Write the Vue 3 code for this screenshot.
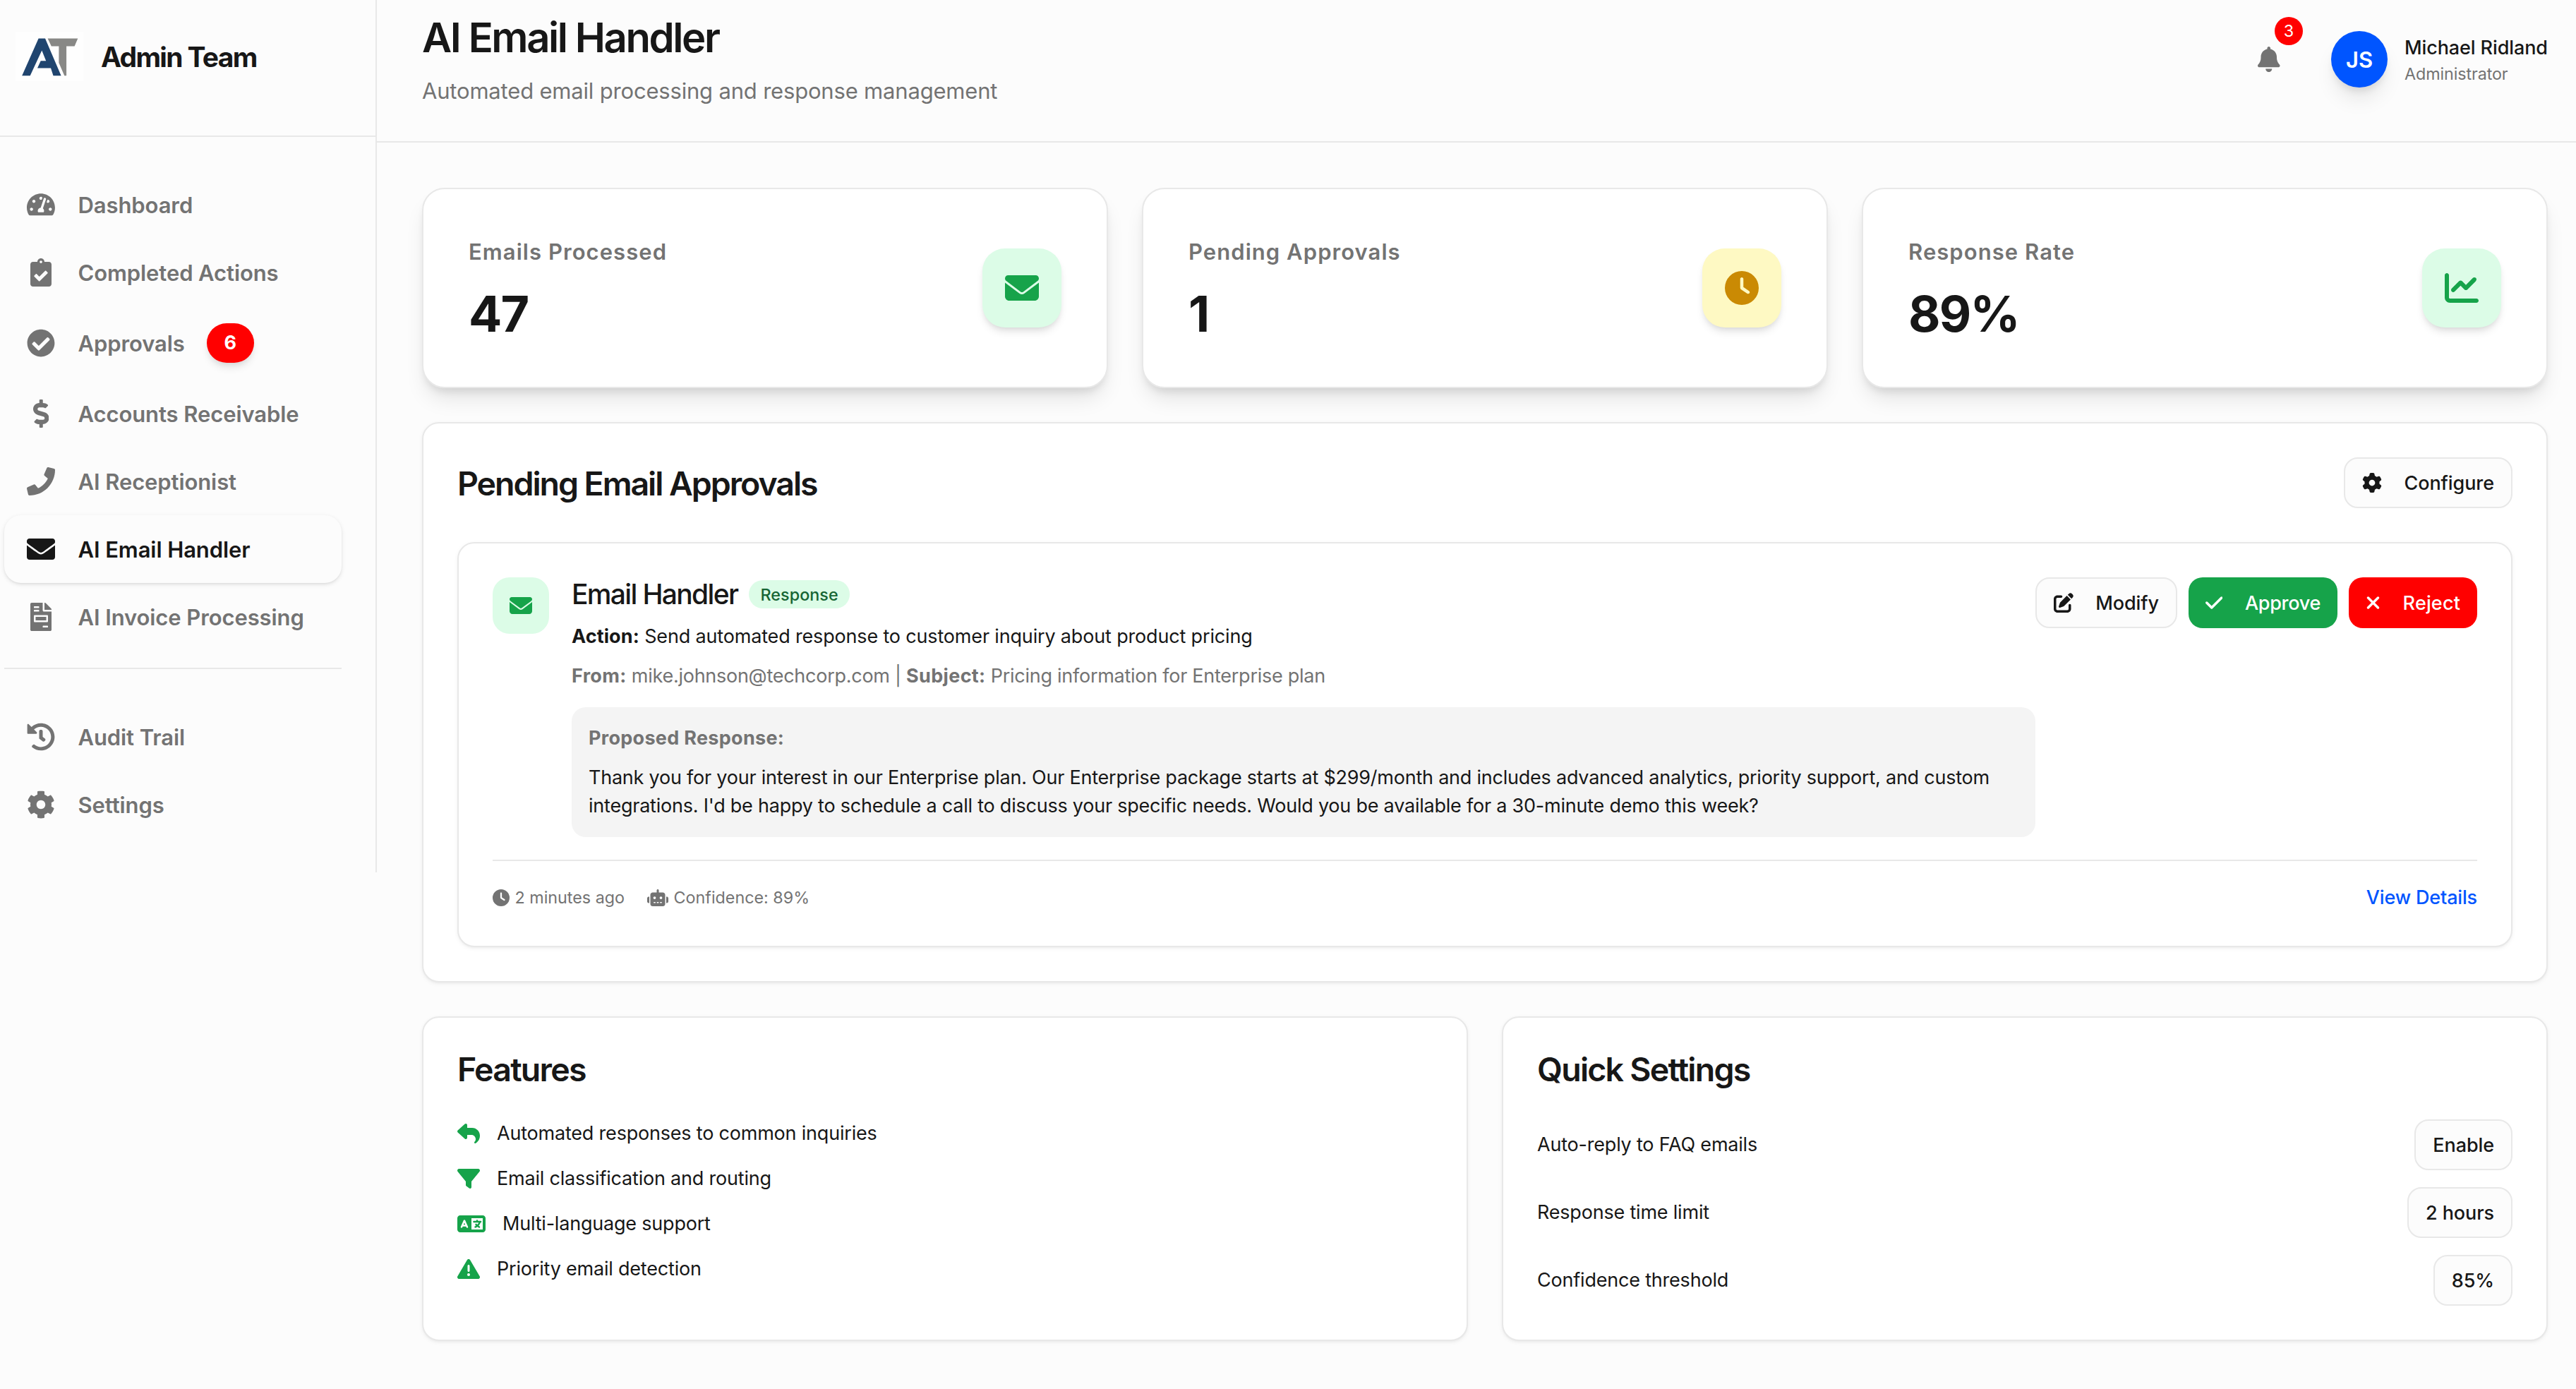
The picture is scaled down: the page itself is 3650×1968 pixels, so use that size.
<script setup>
import { h } from "vue";

// name: [width, height, path]
const icons = {
  gauge: [576, 512, "M288 32C128.94 32 0 160.94 0 320c0 52.8 14.25 102.26 39.06 144.8 5.61 9.62 16.3 15.2 27.44 15.2h443c11.14 0 21.83-5.58 27.44-15.2C561.75 422.26 576 372.8 576 320c0-159.06-128.94-288-288-288zm0 64c14.71 0 26.58 10.13 30.32 23.65-1.11 2.26-2.64 4.23-3.45 6.67l-9.22 27.67c-5.13 3.49-10.97 6.01-17.64 6.01-17.67 0-32-14.33-32-32S270.33 96 288 96zM96 384c-17.67 0-32-14.33-32-32s14.33-32 32-32 32 14.33 32 32-14.33 32-32 32zm48-160c-17.67 0-32-14.33-32-32s14.33-32 32-32 32 14.33 32 32-14.33 32-32 32zm246.77-72.41l-61.33 184C343.13 347.33 352 364.54 352 384c0 11.72-3.38 22.55-8.88 32H232.88c-5.5-9.45-8.88-20.28-8.88-32 0-33.94 26.5-61.43 59.9-63.59l61.34-184.01c4.17-12.56 17.73-19.45 30.36-15.17 12.57 4.19 19.35 17.79 15.17 30.36zm14.66 57.2l15.52-46.55c3.47-1.29 7.13-2.23 11.05-2.23 17.67 0 32 14.33 32 32s-14.33 32-32 32c-11.38-.01-20.89-6.28-26.57-15.22zM480 384c-17.67 0-32-14.33-32-32s14.33-32 32-32 32 14.33 32 32-14.33 32-32 32z"],
  clipboardCheck: [384, 512, "M336 64h-80c0-35.3-28.7-64-64-64s-64 28.7-64 64H48C21.5 64 0 85.5 0 112v352c0 26.5 21.5 48 48 48h288c26.5 0 48-21.5 48-48V112c0-26.5-21.5-48-48-48zM192 40c13.3 0 24 10.7 24 24s-10.7 24-24 24-24-10.7-24-24 10.7-24 24-24zm121.2 231.8l-143 141.8c-4.7 4.7-12.3 4.6-17-.1l-82.6-83.3c-4.7-4.7-4.6-12.3.1-17L99.1 285c4.7-4.7 12.3-4.6 17 .1l46 46.4 106-105.2c4.7-4.7 12.3-4.6 17 .1l28.2 28.4c4.7 4.8 4.6 12.3-.1 17z"],
  checkCircle: [512, 512, "M504 256c0 136.967-111.033 248-248 248S8 392.967 8 256 119.033 8 256 8s248 111.033 248 248zM227.314 387.314l184-184c6.248-6.248 6.248-16.379 0-22.627l-22.627-22.627c-6.248-6.249-16.379-6.249-22.628 0L216 308.118l-70.059-70.059c-6.248-6.248-16.379-6.248-22.628 0l-22.627 22.627c-6.248 6.248-6.248 16.379 0 22.627l104 104c6.249 6.249 16.379 6.249 22.628.001z"],
  dollar: [288, 512, "M209.2 233.4l-108-31.6C88.7 198.2 80 186.5 80 173.5c0-16.3 13.2-29.5 29.5-29.5h66.3c12.2 0 24.2 3.7 34.2 10.5 6.1 4.1 14.3 3.1 19.5-2l34.8-34c7.1-6.9 6.1-18.4-1.8-24.5C238 74.8 207.4 64.1 176 64V16c0-8.8-7.2-16-16-16h-32c-8.8 0-16 7.2-16 16v48h-2.5C45.8 64-5.4 118.7.5 183.6c4.2 46.1 39.4 83.6 83.8 96.6l102.5 30c12.5 3.7 21.2 15.3 21.2 28.3 0 16.3-13.2 29.5-29.5 29.5h-66.3C100 368 88 364.3 78 357.5c-6.1-4.1-14.3-3.1-19.5 2l-34.8 34c-7.1 6.9-6.1 18.4 1.8 24.5 24.5 19.2 55.1 29.9 86.5 30v48c0 8.8 7.2 16 16 16h32c8.8 0 16-7.2 16-16v-48.2c46.6-.9 90.3-28.6 105.7-72.7 21.5-61.6-14.6-124.8-72.5-141.7z"],
  phone: [512, 512, "M493.4 24.6l-104-24c-11.3-2.6-22.9 3.3-27.5 13.9l-48 112c-4.2 9.8-1.4 21.3 6.9 28l60.6 49.6c-36 76.7-98.9 140.5-177.2 177.2l-49.6-60.6c-6.8-8.3-18.2-11.1-28-6.9l-112 48C3.9 366.5-2 378.1.6 389.4l24 104C27.1 504.2 36.7 512 48 512c256.1 0 464-207.5 464-464 0-11.2-7.7-20.9-18.6-23.4z"],
  mail: [512, 512, "M502.3 190.8c3.9-3.1 9.7-.2 9.7 4.7V400c0 26.5-21.5 48-48 48H48c-26.5 0-48-21.5-48-48V195.6c0-5 5.7-7.8 9.7-4.7 22.4 17.4 52.1 39.5 154.1 113.6 21.1 15.4 56.7 47.8 92.2 47.6 35.7.3 72-32.8 92.3-47.6 102-74.1 131.6-96.3 154-113.7zM256 320c23.2.4 56.6-29.2 73.4-41.4 132.7-96.3 142.8-104.7 173.4-128.7 5.8-4.5 9.2-11.5 9.2-18.9v-19c0-26.5-21.5-48-48-48H48c-26.5 0-48 21.5-48 48v19c0 7.4 3.4 14.3 9.2 18.9 30.6 23.9 40.7 32.4 173.4 128.7 16.8 12.2 50.2 41.8 73.4 41.4z"],
  invoice: [384, 512, "M288 256H96v64h192v-64zm89-151L279.1 7c-4.5-4.5-10.6-7-17-7H256v128h128v-6.1c0-6.3-2.5-12.4-7-16.9zm-153 31V0H24C10.7 0 0 10.7 0 24v464c0 13.3 10.7 24 24 24h336c13.3 0 24-10.7 24-24V160H248c-13.2 0-24-10.8-24-24zM64 72c0-4.42 3.58-8 8-8h80c4.42 0 8 3.58 8 8v16c0 4.42-3.58 8-8 8H72c-4.42 0-8-3.58-8-8V72zm0 64c0-4.42 3.58-8 8-8h80c4.42 0 8 3.58 8 8v16c0 4.42-3.58 8-8 8H72c-4.42 0-8-3.58-8-8v-16zm256 304c0 4.42-3.58 8-8 8h-80c-4.42 0-8-3.58-8-8v-16c0-4.42 3.58-8 8-8h80c4.42 0 8 3.58 8 8v16zm0-200v96c0 8.84-7.16 16-16 16H80c-8.84 0-16-7.16-16-16v-96c0-8.84 7.16-16 16-16h224c8.84 0 16 7.16 16 16z"],
  history: [512, 512, "M504 255.531c.253 136.64-111.18 248.372-247.82 248.468-59.015.042-113.223-20.53-155.822-54.911-11.077-8.94-11.905-25.541-1.839-35.607l11.267-11.267c8.609-8.609 22.353-9.551 31.891-1.984C173.062 425.135 212.781 440 256 440c101.705 0 184-82.311 184-184 0-101.705-82.311-184-184-184-48.814 0-93.149 18.969-126.068 49.932l50.754 50.754c10.08 10.08 2.941 27.314-11.313 27.314H24c-8.837 0-16-7.163-16-16V38.627c0-14.254 17.234-21.393 27.314-11.314l49.372 49.372C129.209 34.136 189.552 8 256 8c136.81 0 247.747 110.78 248 247.531zm-180.912 78.784l9.823-12.63c8.138-10.463 6.253-25.542-4.21-33.679L288 256.349V152c0-13.255-10.745-24-24-24h-16c-13.255 0-24 10.745-24 24v135.651l65.409 50.874c10.463 8.137 25.541 6.253 33.679-4.21z"],
  settings: [512, 512, "M487.4 315.7l-42.6-24.6c4.3-23.2 4.3-47 0-70.2l42.6-24.6c4.9-2.8 7.1-8.6 5.5-14-11.1-35.6-30-67.8-54.7-94.6-3.8-4.1-10-5.1-14.8-2.3L380.8 110c-17.9-15.4-38.5-27.3-60.8-35.1V25.8c0-5.6-3.9-10.5-9.4-11.7-36.7-8.2-74.3-7.8-109.2 0-5.5 1.2-9.4 6.1-9.4 11.7V75c-22.2 7.9-42.8 19.8-60.8 35.1L88.7 85.5c-4.9-2.8-11-1.9-14.8 2.3-24.7 26.7-43.6 58.9-54.7 94.6-1.7 5.4.6 11.2 5.5 14L67.3 221c-4.3 23.2-4.3 47 0 70.2l-42.6 24.6c-4.9 2.8-7.1 8.6-5.5 14 11.1 35.6 30 67.8 54.7 94.6 3.8 4.1 10 5.1 14.8 2.3l42.6-24.6c17.9 15.4 38.5 27.3 60.8 35.1v49.2c0 5.6 3.9 10.5 9.4 11.7 36.7 8.2 74.3 7.8 109.2 0 5.5-1.2 9.4-6.1 9.4-11.7v-49.2c22.2-7.9 42.8-19.8 60.8-35.1l42.6 24.6c4.9 2.8 11 1.9 14.8-2.3 24.7-26.7 43.6-58.9 54.7-94.6 1.5-5.5-.7-11.3-5.6-14.1zM256 336c-44.1 0-80-35.9-80-80s35.9-80 80-80 80 35.9 80 80-35.9 80-80 80z"],
  bell: [448, 512, "M224 0c-17.7 0-32 14.3-32 32l0 19.2C119 66 64 130.6 64 208l0 18.8c0 47-17.3 92.4-48.5 127.6l-7.4 8.3c-8.4 9.4-10.4 22.9-5.3 34.4S19.4 416 32 416l384 0c12.6 0 24-7.4 29.2-18.9s3.1-25-5.3-34.4l-7.4-8.3C401.3 319.2 384 273.9 384 226.8l0-18.8c0-77.4-55-142-128-156.8L256 32c0-17.7-14.3-32-32-32zm45.3 493.3c12-12 18.7-28.3 18.7-45.3l-64 0-64 0c0 17 6.7 33.3 18.7 45.3s28.3 18.7 45.3 18.7s33.3-6.7 45.3-18.7z"],
  envelope: [512, 512, "M48 64C21.5 64 0 85.5 0 112c0 15.1 7.1 29.3 19.2 38.4L236.8 313.6c11.4 8.5 27 8.5 38.4 0L492.8 150.4c12.1-9.1 19.2-23.3 19.2-38.4c0-26.5-21.5-48-48-48L48 64zM0 176L0 384c0 35.3 28.7 64 64 64l384 0c35.3 0 64-28.7 64-64l0-208L294.4 339.2c-22.8 17.1-54 17.1-76.8 0L0 176z"],
  clock: [512, 512, "M256 0a256 256 0 1 1 0 512A256 256 0 1 1 256 0zM232 120l0 136c0 8 4 15.5 10.7 20l96 64c11 7.4 25.9 4.4 33.3-6.7s4.4-25.9-6.7-33.3L280 243.2 280 120c0-13.3-10.7-24-24-24s-24 10.7-24 24z"],
  chart: [512, 512, "M64 64c0-17.7-14.3-32-32-32S0 46.3 0 64L0 400c0 44.2 35.8 80 80 80l400 0c17.7 0 32-14.3 32-32s-14.3-32-32-32L80 416c-8.8 0-16-7.2-16-16L64 64zm406.6 86.6c12.5-12.5 12.5-32.8 0-45.3s-32.8-12.5-45.3 0L320 210.7l-57.4-57.4c-12.5-12.5-32.8-12.5-45.3 0l-112 112c-12.5 12.5-12.5 32.8 0 45.3s32.8 12.5 45.3 0L240 221.3l57.4 57.4c12.5 12.5 32.8 12.5 45.3 0l128-128z"],
  gear: [512, 512, "M495.9 166.6c3.2 8.7 .5 18.4-6.4 24.6l-43.3 39.4c1.1 8.3 1.7 16.8 1.7 25.4s-.6 17.1-1.7 25.4l43.3 39.4c6.9 6.2 9.6 15.9 6.4 24.6c-4.4 11.9-9.7 23.3-15.8 34.3l-4.7 8.1c-6.6 11-14 21.4-22.1 31.2c-5.9 7.2-15.7 9.6-24.5 6.8l-55.7-17.7c-13.4 10.3-28.2 18.9-44 25.4l-12.5 57.1c-2 9.1-9 16.3-18.2 17.8c-13.8 2.3-28 3.5-42.5 3.5s-28.7-1.2-42.5-3.5c-9.2-1.5-16.2-8.7-18.2-17.8l-12.5-57.1c-15.8-6.5-30.6-15.1-44-25.4L83.1 425.9c-8.8 2.8-18.6 .3-24.5-6.8c-8.1-9.8-15.5-20.2-22.1-31.2l-4.7-8.1c-6.1-11-11.4-22.4-15.8-34.3c-3.2-8.7-.5-18.4 6.4-24.6l43.3-39.4C64.6 273.1 64 264.6 64 256s.6-17.1 1.7-25.4L22.4 191.2c-6.9-6.2-9.6-15.9-6.4-24.6c4.4-11.9 9.7-23.3 15.8-34.3l4.7-8.1c6.6-11 14-21.4 22.1-31.2c5.9-7.2 15.7-9.6 24.5-6.8l55.7 17.7c13.4-10.3 28.2-18.9 44-25.4l12.5-57.1c2-9.1 9-16.3 18.2-17.8C227.3 1.2 241.5 0 256 0s28.7 1.2 42.5 3.5c9.2 1.5 16.2 8.7 18.2 17.8l12.5 57.1c15.8 6.5 30.6 15.1 44 25.4l55.7-17.7c8.8-2.8 18.6-.3 24.5 6.8c8.1 9.8 15.5 20.2 22.1 31.2l4.7 8.1c6.1 11 11.4 22.4 15.8 34.3zM256 336a80 80 0 1 0 0-160 80 80 0 1 0 0 160z"],
  edit: [512, 512, "M471.6 21.7c-21.9-21.9-57.3-21.9-79.2 0L362.3 51.7l97.9 97.9 30.1-30.1c21.9-21.9 21.9-57.3 0-79.2L471.6 21.7zm-299.2 220c-6.1 6.1-10.8 13.6-13.5 21.9l-29.6 88.8c-2.9 8.6-.6 18.1 5.8 24.6s15.9 8.7 24.6 5.8l88.8-29.6c8.2-2.7 15.7-7.4 21.9-13.5L437.7 172.3 339.7 74.3 172.4 241.7zM96 64C43 64 0 107 0 160L0 416c0 53 43 96 96 96l256 0c53 0 96-43 96-96l0-96c0-17.7-14.3-32-32-32s-32 14.3-32 32l0 96c0 17.7-14.3 32-32 32L96 448c-17.7 0-32-14.3-32-32l0-256c0-17.7 14.3-32 32-32l96 0c17.7 0 32-14.3 32-32s-14.3-32-32-32L96 64z"],
  check: [448, 512, "M438.6 105.4c12.5 12.5 12.5 32.8 0 45.3l-256 256c-12.5 12.5-32.8 12.5-45.3 0l-128-128c-12.5-12.5-12.5-32.8 0-45.3s32.8-12.5 45.3 0L160 338.7 393.4 105.4c12.5-12.5 32.8-12.5 45.3 0z"],
  xmark: [384, 512, "M342.6 150.6c12.5-12.5 12.5-32.8 0-45.3s-32.8-12.5-45.3 0L192 210.7 86.6 105.4c-12.5-12.5-32.8-12.5-45.3 0s-12.5 32.8 0 45.3L146.7 256 41.4 361.4c-12.5 12.5-12.5 32.8 0 45.3s32.8 12.5 45.3 0L192 301.3 297.4 406.6c12.5 12.5 32.8 12.5 45.3 0s12.5-32.8 0-45.3L237.3 256 342.6 150.6z"],
  robot: [640, 512, "M320 0c17.7 0 32 14.3 32 32l0 64 120 0c39.8 0 72 32.2 72 72l0 272c0 39.8-32.2 72-72 72l-304 0c-39.8 0-72-32.2-72-72l0-272c0-39.8 32.2-72 72-72l120 0 0-64c0-17.7 14.3-32 32-32zM208 384c-8.8 0-16 7.2-16 16s7.2 16 16 16l32 0c8.8 0 16-7.2 16-16s-7.2-16-16-16l-32 0zm96 0c-8.8 0-16 7.2-16 16s7.2 16 16 16l32 0c8.8 0 16-7.2 16-16s-7.2-16-16-16l-32 0zm96 0c-8.8 0-16 7.2-16 16s7.2 16 16 16l32 0c8.8 0 16-7.2 16-16s-7.2-16-16-16l-32 0zM264 256a40 40 0 1 0-80 0 40 40 0 1 0 80 0zm152 40a40 40 0 1 0 0-80 40 40 0 1 0 0 80zM48 224l16 0 0 192-16 0c-26.5 0-48-21.5-48-48l0-96c0-26.5 21.5-48 48-48zm544 0c26.5 0 48 21.5 48 48l0 96c0 26.5-21.5 48-48 48l-16 0 0-192 16 0z"],
  reply: [512, 512, "M205 34.8c11.5 5.1 19 16.6 19 29.2l0 64 112 0c97.2 0 176 78.8 176 176c0 113.3-81.5 163.9-100.2 174.1c-2.5 1.4-5.3 1.9-8.1 1.9c-10.9 0-19.7-8.9-19.7-19.7c0-7.5 4.3-14.4 9.8-19.5c9.4-8.8 22.2-26.4 22.2-56.7c0-53-43-96-96-96l-96 0 0 64c0 12.6-7.4 24.1-19 29.2s-25 3-34.4-5.4l-160-144C3.9 225.7 0 217.1 0 208s3.9-17.7 10.6-23.8l160-144c9.4-8.5 22.9-10.6 34.4-5.4z"],
  filter: [512, 512, "M3.9 54.9C10.5 40.9 24.5 32 40 32l432 0c15.5 0 29.5 8.9 36.1 22.9s4.6 30.5-5.2 42.5L320 320.9 320 448c0 12.1-6.8 23.2-17.7 28.6s-23.8 4.3-33.5-3l-64-48c-8.1-6-12.8-15.5-12.8-25.6l0-79.1L9 97.3C-.7 85.4-2.8 68.8 3.9 54.9z"],
  language: [640, 512, "M0 128C0 92.7 28.7 64 64 64l192 0 48 0 16 0 256 0c35.3 0 64 28.7 64 64l0 256c0 35.3-28.7 64-64 64l-256 0-16 0-48 0L64 448c-35.3 0-64-28.7-64-64L0 128zm320 0l0 256 256 0 0-256-256 0zM178.3 175.9c-3.2-7.2-10.4-11.9-18.3-11.9s-15.1 4.7-18.3 11.9l-64 144c-4.5 10.1 .1 21.9 10.2 26.4s21.9-.1 26.4-10.2l8.9-20.1 73.6 0 8.9 20.1c4.5 10.1 16.3 14.6 26.4 10.2s14.6-16.3 10.2-26.4l-64-144zM160 233.2L179 276l-38 0 19-42.8zM448 164c11 0 20 9 20 20l0 4 44 0 16 0c11 0 20 9 20 20s-9 20-20 20l-2 0-1.6 4.5c-8.9 24.4-22.4 46.6-39.6 65.4c.9 .6 1.8 1.1 2.7 1.6l18.9 11.3c9.5 5.7 12.5 18 6.9 27.4s-18 12.5-27.4 6.9l-18.9-11.3c-4.5-2.7-8.8-5.5-13.1-8.5c-10.6 7.5-21.9 14-34 19.4l-3.6 1.6c-10.1 4.5-21.9-.1-26.4-10.2s.1-21.9 10.2-26.4l3.6-1.6c6.4-2.9 12.6-6.1 18.5-9.8l-12.2-12.2c-7.8-7.8-7.8-20.5 0-28.3s20.5-7.8 28.3 0l14.6 14.6 .5 .5c12.4-13.1 22.5-28.3 29.8-45L448 228l-72 0c-11 0-20-9-20-20s9-20 20-20l52 0 0-4c0-11 9-20 20-20z"],
  warning: [512, 512, "M256 32c14.2 0 27.3 7.5 34.5 19.8l216 368c7.3 12.4 7.3 27.7 .2 40.1S486.3 480 472 480L40 480c-14.3 0-27.6-7.7-34.7-20.1s-7-27.8 .2-40.1l216-368C228.7 39.5 241.8 32 256 32zm0 128c-13.3 0-24 10.7-24 24l0 112c0 13.3 10.7 24 24 24s24-10.7 24-24l0-112c0-13.3-10.7-24-24-24zm32 224a32 32 0 1 0 -64 0 32 32 0 1 0 64 0z"],
};

function Icon(props) {
  const [w, ht, d] = icons[props.name];
  return h(
    "svg",
    { viewBox: `0 0 ${w} ${ht}`, width: `${w / ht}em`, height: "1em", fill: "currentColor" },
    [h("path", { d })]
  );
}
Icon.props = ["name"];

const mainNav = [
  { label: "Dashboard", icon: "gauge" },
  { label: "Completed Actions", icon: "clipboardCheck" },
  { label: "Approvals", icon: "checkCircle", badge: 6 },
  { label: "Accounts Receivable", icon: "dollar" },
  { label: "AI Receptionist", icon: "phone" },
  { label: "AI Email Handler", icon: "mail", active: true },
  { label: "AI Invoice Processing", icon: "invoice" },
];

const footerNav = [
  { label: "Audit Trail", icon: "history" },
  { label: "Settings", icon: "settings" },
];

const stats = [
  { label: "Emails Processed", value: "47", icon: "envelope", tone: "green" },
  { label: "Pending Approvals", value: "1", icon: "clock", tone: "yellow" },
  { label: "Response Rate", value: "89%", icon: "chart", tone: "green" },
];

const features = [
  { label: "Automated responses to common inquiries", icon: "reply" },
  { label: "Email classification and routing", icon: "filter" },
  { label: "Multi-language support", icon: "language" },
  { label: "Priority email detection", icon: "warning" },
];

const settings = [
  { label: "Auto-reply to FAQ emails", value: "Enable" },
  { label: "Response time limit", value: "2 hours" },
  { label: "Confidence threshold", value: "85%" },
];
</script>

<template>
  <div class="layout">
    <aside class="sidebar">
      <div class="brand">
        <svg class="logo" viewBox="0 0 96 70">
          <rect width="96" height="70" fill="#fefefe" />
          <path
            fill="#20456f"
            d="M9.2 62.2 32.6 9.6H42L64.6 62.2H53.5L50 51.5H31L35.7 41.2H43.2L37.3 26.6 20.7 62.2Z"
          />
          <path
            fill="#888886"
            d="M45.6 9.6H88.3L83.6 20.6H72.1V62.2H69.3L61.4 44V20.6H50.8Z"
          />
        </svg>
        <span class="brand-name">Admin Team</span>
      </div>

      <nav class="nav">
        <a
          v-for="item in mainNav"
          :key="item.label"
          class="nav-item"
          :class="{ active: item.active, 'has-badge': item.badge }"
        >
          <span class="nav-icon"><Icon :name="item.icon" :class="item.icon" /></span>
          <span>{{ item.label }}</span>
          <span v-if="item.badge" class="nav-badge">{{ item.badge }}</span>
        </a>
        <div class="nav-divider"></div>
        <a v-for="item in footerNav" :key="item.label" class="nav-item">
          <span class="nav-icon"><Icon :name="item.icon" /></span>
          <span>{{ item.label }}</span>
        </a>
      </nav>
    </aside>

    <main class="main">
      <header class="header">
        <div>
          <h1>AI Email Handler</h1>
          <p class="subtitle">Automated email processing and response management</p>
        </div>
        <div class="user-area">
          <div class="bell">
            <Icon name="bell" />
            <span class="bell-badge">3</span>
          </div>
          <div class="avatar">JS</div>
          <div class="user">
            <div class="user-name">Michael Ridland</div>
            <div class="user-role">Administrator</div>
          </div>
        </div>
      </header>

      <div class="content">
        <section class="stats">
          <div v-for="stat in stats" :key="stat.label" class="stat-card">
            <div class="stat-text">
              <div class="stat-label">{{ stat.label }}</div>
              <div class="stat-value">{{ stat.value }}</div>
            </div>
            <div class="stat-icon" :class="stat.tone"><Icon :name="stat.icon" /></div>
          </div>
        </section>

        <section class="panel">
          <div class="panel-head">
            <h2>Pending Email Approvals</h2>
            <button class="btn"><Icon name="gear" />Configure</button>
          </div>

          <div class="approval">
            <div class="approval-top">
              <div class="approval-icon"><Icon name="envelope" /></div>
              <div class="approval-body">
                <div class="approval-title">
                  <h3>Email Handler</h3>
                  <span class="pill">Response</span>
                </div>
                <p class="line">
                  <strong>Action:</strong> Send automated response to customer inquiry about product pricing
                </p>
                <p class="line muted">
                  <strong>From:</strong> mike.johnson@techcorp.com | <strong>Subject:</strong> Pricing information for Enterprise plan
                </p>
                <div class="proposal">
                  <div class="proposal-label">Proposed Response:</div>
                  <p>
                    Thank you for your interest in our Enterprise plan. Our Enterprise package starts at $299/month and includes advanced analytics, priority support, and custom integrations. I'd be happy to schedule a call to discuss your specific needs. Would you be available for a 30-minute demo this week?
                  </p>
                </div>
              </div>
              <div class="actions">
                <button class="btn"><Icon name="edit" />Modify</button>
                <button class="btn approve"><Icon name="check" />Approve</button>
                <button class="btn reject"><Icon name="xmark" />Reject</button>
              </div>
            </div>
            <div class="approval-foot">
              <div class="meta">
                <span><Icon name="clock" />2 minutes ago</span>
                <span><Icon name="robot" />Confidence: 89%</span>
              </div>
              <a class="details">View Details</a>
            </div>
          </div>
        </section>

        <section class="bottom">
          <div class="panel">
            <h2>Features</h2>
            <ul class="features">
              <li v-for="f in features" :key="f.label"><Icon :name="f.icon" />{{ f.label }}</li>
            </ul>
          </div>
          <div class="panel">
            <h2>Quick Settings</h2>
            <div class="settings">
              <div v-for="s in settings" :key="s.label" class="setting">
                <span>{{ s.label }}</span>
                <button class="btn">{{ s.value }}</button>
              </div>
            </div>
          </div>
        </section>
      </div>
    </main>
  </div>
</template>

<style>
body {
  background: #fcfcfc;
}
</style>

<style scoped>
* {
  box-sizing: border-box;
}

.layout {
  display: flex;
  align-items: flex-start;
  height: 1968px;
  overflow: hidden;
  background: #fcfcfc;
  color: #171717;
  font-family: "Inter", sans-serif;
  white-space: nowrap;
}

h1,
h2,
h3,
p,
ul {
  margin: 0;
  padding: 0;
}

svg {
  display: block;
  flex: none;
}

/* Sidebar */
.sidebar {
  flex: none;
  width: 534px;
  height: 1236px;
  border-right: 2px solid #e8e8e8;
}

.brand {
  display: flex;
  gap: 25px;
  height: 194px;
  padding: 45px 0 0 22px;
  border-bottom: 2px solid #e8e8e8;
}

.logo {
  width: 96px;
  height: 70px;
}

.brand-name {
  font-size: 39px;
  font-weight: 650;
  line-height: 72px;
  letter-spacing: -0.043em;
}

.nav {
  padding: 48px 48px 48px 6px;
}

.nav-item {
  display: flex;
  align-items: center;
  height: 96px;
  padding-left: 32px;
  border-radius: 24px;
  color: #737373;
  font-size: 31px;
  font-weight: 580;
  letter-spacing: -0.003em;
}

.nav-item.has-badge {
  height: 104px;
}

.nav-item.active {
  color: #171717;
  box-shadow: 0 2px 6px rgba(0, 0, 0, 0.1), 0 2px 4px -2px rgba(0, 0, 0, 0.1);
}

.nav-icon {
  display: flex;
  justify-content: center;
  width: 40px;
  margin-right: 32.5px;
  font-size: 40px;
}

.nav-icon .gauge {
  font-size: 35.5px;
}

.nav-badge {
  width: 67px;
  height: 56px;
  margin-left: 31px;
  border-radius: 28px;
  background: #ff0000;
  box-shadow: 0 8px 12px -2px rgba(0, 0, 0, 0.1), 0 4px 8px -4px rgba(0, 0, 0, 0.1);
  color: #fff;
  font-size: 27px;
  font-weight: 700;
  line-height: 56px;
  text-align: center;
}

.nav-divider {
  height: 2px;
  margin: 24px 0 48px;
  background: #e8e8e8;
}

/* Header */
.main {
  flex: 1;
}

.header {
  display: flex;
  justify-content: space-between;
  height: 202px;
  padding: 13px 40px 0 64px;
  border-bottom: 2px solid #e8e8e8;
}

h1 {
  font-size: 58px;
  font-weight: 600;
  line-height: 80px;
  letter-spacing: -0.0416em;
}

.subtitle {
  margin-top: 12px;
  color: #737373;
  font-size: 31px;
  line-height: 48px;
  letter-spacing: -0.006em;
}

.user-area {
  display: flex;
  align-items: center;
  height: 80px;
  margin-top: 31px;
}

.bell {
  position: relative;
  margin-right: 72.5px;
  color: #737373;
  font-size: 36px;
}

.bell-badge {
  position: absolute;
  top: -42px;
  left: 24px;
  width: 40px;
  height: 40px;
  border-radius: 50%;
  background: #ff0000;
  color: #fff;
  font-size: 23.3px;
  line-height: 40px;
  text-align: center;
}

.avatar {
  width: 80px;
  height: 80px;
  border-radius: 50%;
  background: #0055ff;
  box-shadow: 0 20px 30px -6px rgba(0, 0, 0, 0.1), 0 8px 12px -4px rgba(0, 0, 0, 0.1);
  color: #fff;
  font-size: 31px;
  font-weight: 600;
  line-height: 81px;
  text-align: center;
}

.user {
  width: 203px;
  margin-left: 24px;
}

.user-name {
  font-size: 27px;
  font-weight: 500;
  line-height: 40px;
  letter-spacing: -0.004em;
}

.user-role {
  color: #737373;
  font-size: 23.3px;
  line-height: 33px;
  letter-spacing: -0.004em;
}

/* Stats */
.content {
  display: flex;
  flex-direction: column;
  gap: 48px;
  padding: 64px 40px 0 64px;
}

.stats {
  display: grid;
  grid-template-columns: repeat(3, 1fr);
  gap: 48px;
}

.stat-card {
  display: flex;
  align-items: center;
  justify-content: space-between;
  height: 284px;
  padding: 0 64px;
  border: 2px solid #e8e8e8;
  border-radius: 32px;
  background: #fff;
  box-shadow: 0 20px 30px -6px rgba(0, 0, 0, 0.1), 0 8px 12px -4px rgba(0, 0, 0, 0.1);
}

.stat-text {
  padding-top: 6px;
}

.stat-label {
  color: #737373;
  font-size: 31px;
  font-weight: 580;
  line-height: 40px;
  letter-spacing: 0.034em;
}

.stat-value {
  margin-top: 28px;
  font-size: 70px;
  font-weight: 700;
  line-height: 80px;
  letter-spacing: -0.026em;
}

.stat-icon {
  display: flex;
  align-items: center;
  justify-content: center;
  width: 112px;
  height: 112px;
  border-radius: 32px;
  box-shadow: 0 8px 12px -2px rgba(0, 0, 0, 0.1), 0 4px 8px -4px rgba(0, 0, 0, 0.1);
  font-size: 48px;
}

.stat-icon.green {
  background: #dcfce7;
  color: #16a34a;
}

.stat-icon.yellow {
  background: #fef9c3;
  color: #ca8a04;
}

/* Panels */
.panel {
  padding: 48px;
  border: 2px solid #e8e8e8;
  border-radius: 24px;
  background: #fff;
  box-shadow: 0 2px 6px rgba(0, 0, 0, 0.05), 0 2px 4px -2px rgba(0, 0, 0, 0.06);
}

h2 {
  font-size: 46.5px;
  font-weight: 600;
  line-height: 50px;
  letter-spacing: -0.038em;
}

.panel-head {
  display: flex;
  align-items: center;
  justify-content: space-between;
  height: 72px;
  margin-bottom: 48px;
}

.panel-head h2 {
  padding-top: 2px;
  letter-spacing: -0.0443em;
}

.btn {
  display: flex;
  align-items: center;
  gap: 31.5px;
  height: 72px;
  padding: 0 24px;
  border: 2px solid #e8e8e8;
  border-radius: 20px;
  background: #fcfcfc;
  color: #171717;
  font-family: inherit;
  font-size: 27px;
  font-weight: 500;
  letter-spacing: -0.003em;
}

.btn svg {
  font-size: 28px;
}

.btn.approve,
.btn.reject {
  border: 0;
  color: #fff;
}

.btn.approve {
  background: #16a34a;
  letter-spacing: -0.01em;
}

.btn.reject {
  background: #ff0000;
  letter-spacing: 0.006em;
}

.approval {
  height: 574px;
  padding: 48px;
  border: 2px solid #e8e8e8;
  border-radius: 24px;
  background: #fff;
  box-shadow: 0 2px 6px rgba(0, 0, 0, 0.05), 0 2px 4px -2px rgba(0, 0, 0, 0.06);
}

.approval-top {
  display: flex;
  align-items: flex-start;
}

.approval-icon {
  display: flex;
  flex: none;
  align-items: center;
  justify-content: center;
  width: 80px;
  height: 80px;
  margin-right: 32px;
  border-radius: 24px;
  background: #dcfce7;
  color: #16a34a;
  font-size: 32px;
}

.approval-body {
  flex: 1;
  min-width: 0;
}

.approval-title {
  display: flex;
  align-items: center;
  gap: 16px;
  height: 48px;
  margin-bottom: 16px;
}

h3 {
  font-size: 39px;
  font-weight: 500;
  line-height: 48px;
  letter-spacing: -0.0424em;
}

.pill {
  height: 40px;
  padding: 0 16px;
  border-radius: 20px;
  background: #dcfce7;
  color: #166534;
  font-size: 23.3px;
  font-weight: 500;
  line-height: 41px;
  letter-spacing: 0.003em;
}

.line {
  margin-bottom: 16px;
  font-size: 27px;
  line-height: 40px;
  letter-spacing: -0.0062em;
}

.line strong {
  font-weight: 700;
  letter-spacing: 0.004em;
}

.line.muted {
  margin-bottom: 24px;
  color: #737373;
  letter-spacing: -0.0098em;
}

.line.muted strong {
  letter-spacing: 0.012em;
}

.proposal {
  padding: 24px;
  border-radius: 20px;
  background: #f4f4f4;
  font-size: 27px;
  line-height: 40px;
  white-space: normal;
}

.proposal-label {
  margin-bottom: 16px;
  color: #737373;
  font-weight: 700;
  letter-spacing: 0.011em;
}

.proposal p {
  letter-spacing: -0.0084em;
}

.actions {
  display: flex;
  gap: 16px;
}

.approval-foot {
  display: flex;
  align-items: center;
  justify-content: space-between;
  margin-top: 32px;
  padding-top: 32px;
  border-top: 2px solid #e8e8e8;
  line-height: 40px;
}

.meta {
  display: flex;
  gap: 32px;
  color: #737373;
  font-size: 23.3px;
}

.meta span {
  display: flex;
  align-items: center;
  gap: 7.5px;
}

.meta svg {
  font-size: 24px;
}

.details {
  color: #0055ff;
  font-size: 27px;
  font-weight: 500;
  letter-spacing: -0.006em;
}

/* Bottom cards */
.bottom {
  display: grid;
  grid-template-columns: 1fr 1fr;
  gap: 48px;
}

.bottom .panel {
  height: 460px;
}

.features,
.settings {
  display: flex;
  flex-direction: column;
  gap: 24px;
  margin-top: 46px;
  font-size: 27px;
  line-height: 40px;
  letter-spacing: -0.0075em;
}

.features {
  list-style: none;
}

.features li {
  display: flex;
  align-items: center;
  gap: 24px;
}

.features svg {
  color: #16a34a;
  font-size: 32px;
}

.setting {
  display: flex;
  align-items: center;
  justify-content: space-between;
}
</style>
